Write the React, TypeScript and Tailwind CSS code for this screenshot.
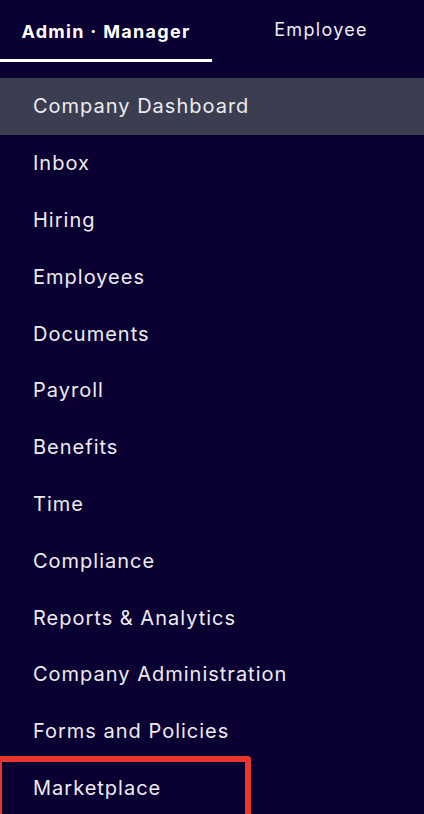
import { useState } from "react"

const items = [
  "Company Dashboard",
  "Inbox",
  "Hiring",
  "Employees",
  "Documents",
  "Payroll",
  "Benefits",
  "Time",
  "Compliance",
  "Reports & Analytics",
  "Company Administration",
  "Forms and Policies",
  "Marketplace",
]

export default function App() {
  const [tab, setTab] = useState("admin")
  const [active, setActive] = useState("Company Dashboard")

  return (
    <div className="h-[814px] w-[424px] overflow-hidden bg-[#0a0032] font-['Inter',sans-serif] text-[#ececf0]">
      <div className="grid h-[62px] grid-cols-2">
        <button
          onClick={() => setTab("admin")}
          className={`flex h-full items-start justify-center pt-[18px] text-[18px] tracking-[1.3px] ${
            tab === "admin" ? "border-b-[3px] border-white font-bold text-white" : ""
          }`}
        >
          Admin · Manager
        </button>
        <button
          onClick={() => setTab("employee")}
          className={`flex h-full items-start justify-center pl-[6px] pt-[16px] text-[18px] tracking-[1.3px] ${
            tab === "employee" ? "border-b-[3px] border-white font-bold text-white" : ""
          }`}
        >
          Employee
        </button>
      </div>

      <nav className="mt-[16px] flex flex-col">
        {items.map((item) => (
          <a
            key={item}
            href="#"
            onClick={(e) => {
              e.preventDefault()
              setActive(item)
            }}
            className={`relative flex h-[56.8px] shrink-0 items-center pl-[33px] text-[20px] tracking-[1px] ${
              active === item ? "bg-[#3b3e50]" : ""
            }`}
          >
            {item}
            {item === "Marketplace" && (
              <span className="pointer-events-none absolute -left-[4px] top-[-4px] h-[70px] w-[255px] rounded-[3px] border-[6px] border-[#e8362a]" />
            )}
          </a>
        ))}
      </nav>
    </div>
  )
}
